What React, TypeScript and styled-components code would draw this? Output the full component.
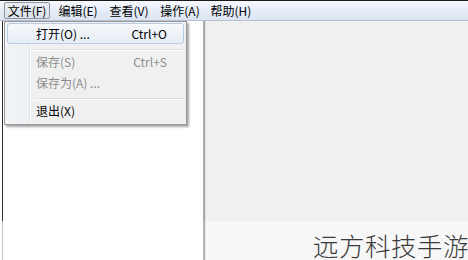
import React from "react"
import styled, { createGlobalStyle } from "styled-components"

const GlobalStyle = createGlobalStyle`
    html, body {
        margin: 0;
        padding: 0;
        background: #ffffff;
    }
    body {
        font-family: "Noto Sans CJK SC", "Liberation Sans", sans-serif;
        -webkit-font-smoothing: antialiased;
    }
`

const Window = styled.div`
    position: relative;
    width: 468px;
    height: 260px;
    overflow: hidden;
    display: flex;
    flex-direction: column;
    border-top: 1px solid #1a1a1a;
    box-sizing: border-box;
    background: #ffffff;
`

const MenuBar = styled.div`
    height: 19px;
    display: flex;
    align-items: center;
    padding-left: 4px;
    gap: 5px;
    background: linear-gradient(#f6f9fd, #e6edf7 50%, #dbe4f2);
    border-bottom: 1px solid #b6c0cf;
    font-size: 12px;
    color: #000;
`

const MenuTitle = styled.div<{ $open?: boolean }>`
    height: 17px;
    width: 46px;
    display: flex;
    align-items: center;
    justify-content: center;
    box-sizing: border-box;
    border-radius: 2px;
    border: 1px solid ${p => (p.$open ? "#8e959e" : "transparent")};
    background: ${p => (p.$open ? "linear-gradient(#e9edf2, #dde3ea)" : "transparent")};
    white-space: nowrap;
`

const Body = styled.div`
    display: flex;
    height: 200px;
`

const TreePane = styled.div`
    width: 200px;
    margin-left: 2px;
    background: #ffffff;
    border-left: 1px solid #2e2e2e;
    border-right: 2px solid #a9a9a9;
    box-shadow: 1px 0 0 #e2e2e2;
`

const ContentPane = styled.div`
    flex: 1;
    margin-left: 1px;
    background: #f0f0f0;
`

const Footer = styled.div`
    flex: 1;
    display: flex;
`

const FooterLeft = styled.div`
    width: 200px;
    margin-left: 2px;
    background: #ffffff;
    border-left: 1px solid #c4c4c4;
    border-right: 2px solid #b4b4b4;
    box-shadow: 1px 0 0 #e6e6e6;
`

const FooterRight = styled.div`
    flex: 1;
    margin-left: 1px;
    background: #f7f7f7;
    position: relative;
    overflow: hidden;
`

const Watermark = styled.div`
    position: absolute;
    left: 107px;
    top: 5px;
    font-size: 25.5px;
    letter-spacing: 0.5px;
    color: #3a3a3a;
    white-space: nowrap;
    font-weight: 300;
`

const Dropdown = styled.div`
    position: absolute;
    top: 20px;
    left: 4px;
    width: 183px;
    height: 104px;
    box-sizing: border-box;
    border: 1px solid #979797;
    padding: 1px 2px 0 2px;
    background:
        linear-gradient(90deg, transparent 24px, #e2e3e3 24px, #e2e3e3 25px, #ffffff 25px, #ffffff 26px, transparent 26px),
        linear-gradient(90deg, #f1f3f6 0, #eef1f5 24px, #f0f0f0 24px);
    box-shadow: 2px 2px 2px rgba(0, 0, 0, 0.35);
    font-size: 12px;
`

const Item = styled.div<{ $disabled?: boolean; $hot?: boolean }>`
    height: 21px;
    display: flex;
    align-items: center;
    justify-content: space-between;
    box-sizing: border-box;
    padding: 0 16px 0 28px;
    border-radius: 3px;
    color: ${p => (p.$disabled ? "#8d8d8d" : "#000000")};
    border: 1px solid ${p => (p.$hot ? "#b7cde6" : "transparent")};
    background: ${p => (p.$hot ? "linear-gradient(#f6f8fb, #e7edf5)" : "transparent")};
    white-space: nowrap;
`

const Separator = styled.div`
    height: 7px;
    margin-left: 27px;
    box-sizing: border-box;
    padding-top: 5px;

    &::after {
        content: "";
        display: block;
        height: 1px;
        background: #e0e0e0;
        box-shadow: 0 1px 0 #ffffff;
    }
`

type MenuEntry = { label: string; shortcut?: string; disabled?: boolean; hot?: boolean } | "sep"

const fileMenu: MenuEntry[] = [
    { label: "打开(O) ...", shortcut: "Ctrl+O", hot: true },
    "sep",
    { label: "保存(S)", shortcut: "Ctrl+S", disabled: true },
    { label: "保存为(A) ...", disabled: true },
    "sep",
    { label: "退出(X)" },
]

const menuTitles = ["文件(F)", "编辑(E)", "查看(V)", "操作(A)", "帮助(H)"]

export default function App() {
    return (
        <>
            <GlobalStyle />
            <Window>
                <MenuBar>
                    {menuTitles.map((t, i) => (
                        <MenuTitle key={t} $open={i === 0}>{t}</MenuTitle>
                    ))}
                </MenuBar>
                <Body>
                    <TreePane />
                    <ContentPane />
                </Body>
                <Footer>
                    <FooterLeft />
                    <FooterRight>
                        <Watermark>远方科技手游</Watermark>
                    </FooterRight>
                </Footer>
                <Dropdown>
                    {fileMenu.map((e, i) =>
                        e === "sep" ? (
                            <Separator key={i} />
                        ) : (
                            <Item key={i} $disabled={e.disabled} $hot={e.hot}>
                                <span>{e.label}</span>
                                {e.shortcut ? <span>{e.shortcut}</span> : null}
                            </Item>
                        )
                    )}
                </Dropdown>
            </Window>
        </>
    )
}
